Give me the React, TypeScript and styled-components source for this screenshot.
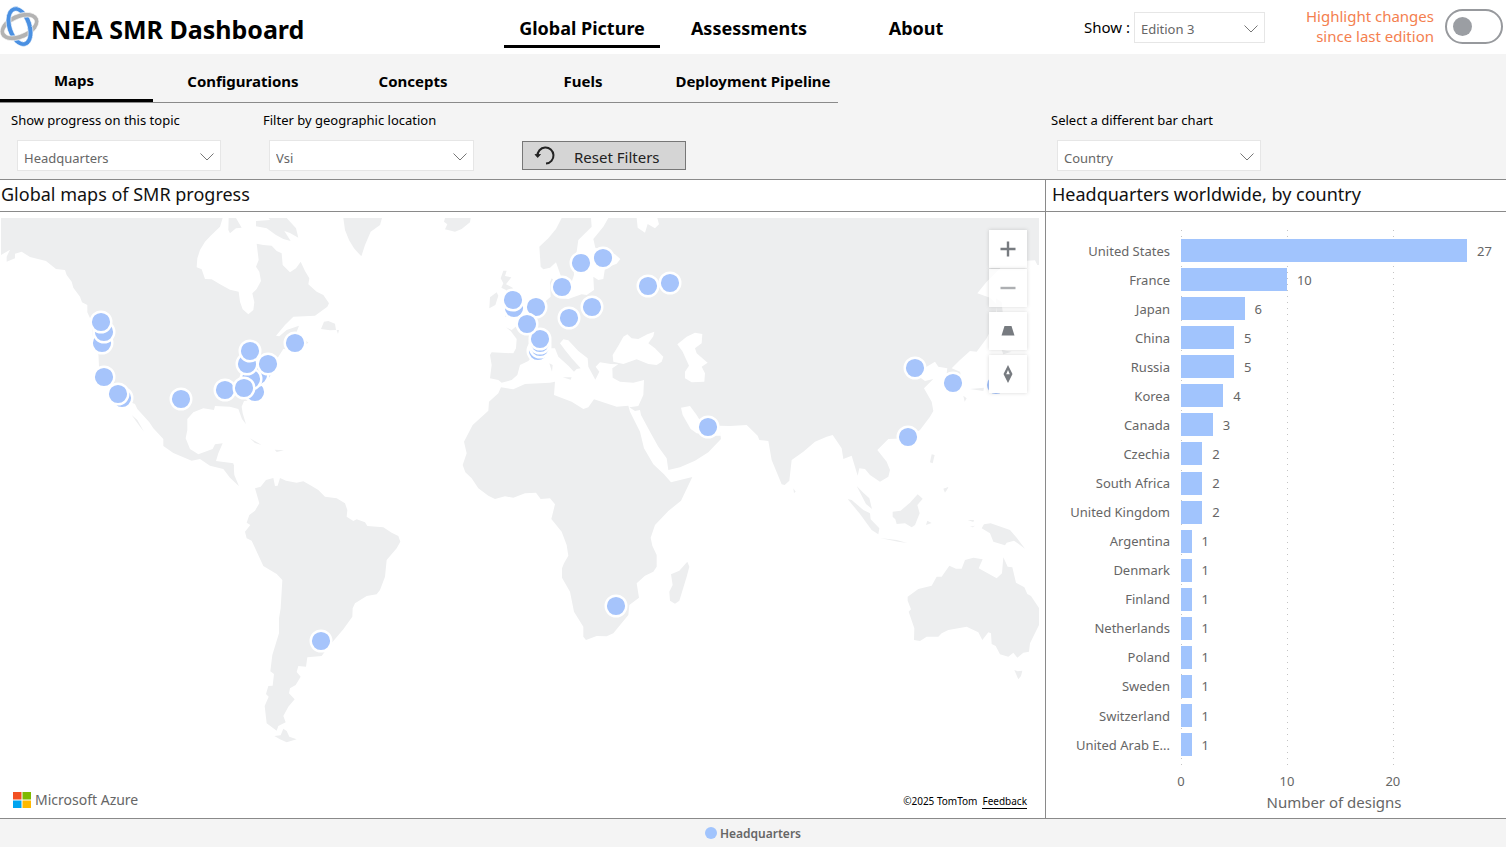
import React from "react";
import styled, { createGlobalStyle } from "styled-components";

const GlobalStyle = createGlobalStyle`
  *, *::before, *::after { box-sizing: border-box; }
  body {
    margin: 0;
    background: #fff;
    color: #000;
    font-family: "Noto Sans", "Open Sans", sans-serif;
    font-size: 13px;
  }
  button, select, input { font-family: inherit; }
`;

const RULE = "#8a8a8a";
const COLUMNS = "minmax(0, 1045fr) minmax(0, 461fr)";

const Page = styled.div`
  min-height: 100vh;
  display: flex;
  flex-direction: column;
`;

/* ---------- header ---------- */

const Header = styled.header`
  height: 54px;
  display: flex;
  align-items: center;
  background: #fff;
`;

const Brand = styled.div`
  flex: 0 0 504px;
  display: flex;
  align-items: center;
  gap: 11px;
`;

const Title = styled.h1`
  margin: 0;
  padding-top: 3px;
  font-size: 25px;
  line-height: 32px;
  font-weight: 700;
  white-space: nowrap;
`;

const MainNav = styled.nav`
  display: flex;
  gap: 11px;
`;

const NavLink = styled.a<{ $active?: boolean }>`
  width: 156px;
  height: 42px;
  padding-top: 10px;
  text-align: center;
  color: #000;
  text-decoration: none;
  font-size: 18px;
  line-height: 24px;
  font-weight: 700;
  border-bottom: 3px solid ${(p) => (p.$active ? "#000" : "transparent")};
`;

const HeaderTools = styled.div`
  margin-left: auto;
  padding-right: 3px;
  display: flex;
  align-items: center;
`;

const ShowLabel = styled.label`
  margin-right: 4px;
  font-size: 15px;
`;

const HighlightLabel = styled.label`
  width: 180px;
  padding: 0 11px 2px 0;
  text-align: right;
  font-size: 15px;
  line-height: 20px;
  color: #f4804f;
`;

const Toggle = styled.input`
  appearance: none;
  margin: 0 0 2px;
  width: 58px;
  height: 35px;
  border: 2px solid #97999d;
  border-radius: 18px;
  background: #fff;
  display: flex;
  align-items: center;
  padding-left: 6px;

  &::before {
    content: "";
    width: 19px;
    height: 19px;
    border-radius: 50%;
    background: #9b9ea3;
  }
  &:checked {
    justify-content: flex-end;
    padding-right: 6px;
  }
`;

/* ---------- selects ---------- */

const SelectBox = styled.span<{ $width: number }>`
  position: relative;
  display: block;
  width: ${(p) => p.$width}px;
  height: 31px;

  svg {
    position: absolute;
    right: 6px;
    top: 12px;
    pointer-events: none;
  }
`;

const Select = styled.select`
  appearance: none;
  width: 100%;
  height: 100%;
  padding: 4px 28px 0 6px;
  border: 1px solid #e6e6e6;
  border-radius: 0;
  background: #fff;
  color: #666;
  font-size: 13px;
`;

type DropdownProps = { id: string; value: string; width: number };

const Dropdown = ({ id, value, width }: DropdownProps) => (
  <SelectBox $width={width}>
    <Select id={id} defaultValue={value}>
      <option>{value}</option>
    </Select>
    <svg width="16" height="10" viewBox="0 0 16 10" fill="none" stroke="#777">
      <path d="M1.5 1.5 8 8l6.500-6.500" />
    </svg>
  </SelectBox>
);

/* ---------- tabs and filters ---------- */

const Controls = styled.section`
  background: #f4f4f4;
  border-bottom: 1px solid ${RULE};
`;

const Tabs = styled.nav`
  width: 838px;
  height: 49px;
  display: flex;
  border-bottom: 1px solid ${RULE};
`;

const Tab = styled.a<{ $active?: boolean }>`
  flex: 0 0 ${(p) => (p.$active ? 153 : 170)}px;
  height: 48px;
  margin-right: ${(p) => (p.$active ? 5 : 0)}px;
  padding: ${(p) => (p.$active ? "15px 5px 0 0" : "16px 0 0")};
  border-bottom: ${(p) => (p.$active ? "3px solid #000" : "0")};
  text-align: center;
  white-space: nowrap;
  text-decoration: none;
  color: #000;
  font-size: 15px;
  line-height: 22px;
  font-weight: 700;
`;

const Filters = styled.div`
  display: grid;
  grid-template-columns: ${COLUMNS};
  height: 76px;
`;

const FilterGroup = styled.div<{ $indent: number }>`
  display: flex;
  align-items: flex-start;
  gap: 42px;
  padding: 7px 0 0 ${(p) => p.$indent}px;
`;

const Field = styled.div`
  display: flex;
  flex-direction: column;
  gap: 10px;
  padding-left: 6px;

  label {
    margin-left: -6px;
    font-size: 13px;
    line-height: 20px;
    white-space: nowrap;
  }
`;

const ResetButton = styled.button`
  width: 164px;
  height: 29px;
  margin: 31px 0 0 6px;
  padding: 2px 0 0 11px;
  display: flex;
  align-items: center;
  gap: 18px;
  border: 1px solid #777;
  background: #d5d5d5;
  color: #222;
  font-size: 15px;
  text-align: left;

  svg { margin-top: -4px; }
`;

/* ---------- panels ---------- */

const Panels = styled.main`
  flex: 1;
  display: grid;
  grid-template-columns: ${COLUMNS};
`;

const Panel = styled.section`
  display: flex;
  flex-direction: column;
  min-width: 0;

  & + & { border-left: 1px solid ${RULE}; }
`;

const PanelTitle = styled.h2<{ $indent: number }>`
  margin: 0;
  height: 32px;
  padding-left: ${(p) => p.$indent}px;
  border-bottom: 1px solid ${RULE};
  font-size: 18px;
  line-height: 28px;
  font-weight: 400;
  white-space: nowrap;
  color: #111;
`;

/* ---------- map ---------- */

const MapArea = styled.div`
  position: relative;
  flex: 1;
  min-height: 606px;
  padding: 6px 6px 6px 1px;
  display: flex;
`;

const MapSvg = styled.svg`
  width: 100%;
  height: 100%;
  min-height: 594px;
`;

const MapControls = styled.div`
  position: absolute;
  top: 18px;
  right: 18px;
  display: flex;
  flex-direction: column;
`;

const MapButton = styled.button<{ $gap?: number; $faded?: boolean }>`
  width: 38px;
  height: 38px;
  margin-top: ${(p) => p.$gap ?? 0}px;
  padding: 0;
  border: 0;
  display: grid;
  place-items: center;
  background: ${(p) => (p.$faded ? "rgba(255,255,255,.8)" : "#fff")};
  box-shadow: 0 0 4px rgba(0, 0, 0, 0.16);

  svg { opacity: ${(p) => (p.$faded ? 0.6 : 1)}; }
`;

const MapFooter = styled.div`
  position: absolute;
  left: 13px;
  right: 18px;
  bottom: 8px;
  display: flex;
  align-items: center;
  justify-content: space-between;
`;

const Azure = styled.span`
  display: flex;
  align-items: center;
  gap: 4px;
  font-size: 14px;
  line-height: 20px;
  color: #666;
`;

const Attribution = styled.span`
  display: flex;
  gap: 5px;
  padding-top: 2px;
  font-size: 10px;
  line-height: 14px;

  a {
    color: #000;
    text-decoration: none;
    border-bottom: 1px solid #000;
  }
`;

const WEST = [
  "M3 9H668L660 35 632 62 615 80 600 105 592 130 590 157 605 163 615 192 635 193 660 208 690 224 716 230 720 260 728 283 745 298 760 285 763 262 757 235 770 222 783 198 778 170 768 155 776 135 770 86 790 90 815 92 830 108 845 115 848 150 870 172 888 160 902 140 915 168 928 190 925 208 950 230 970 240 987 265 982 275 945 302 880 305 855 330 828 362 838 364 860 345 897 332 890 350 905 365 925 383 905 395 885 405 850 402 835 425 805 455 800 480 790 500 790 530 760 555 732 558 725 575 728 595 738 628 726 612 715 582 690 575 645 573 642 585 610 580 580 592 562 612 562 645 557 670 570 702 595 718 638 702 645 688 668 685 655 715 648 738 700 745 703 780 717 814 690 788 670 762 630 752 600 732 575 737 520 714 490 693 490 672 460 640 448 622 412 582 405 567 360 550 345 520 315 490 297 455 295 410 280 380 275 320 262 292 262 270 246 262 240 245 220 218 215 200 200 180 195 165 168 162 138 138 90 126 65 110 45 116 45 130 20 140 20 125 30 104 3 120Z",
  "M686 9H708L725 38 708 40 690 55 685 45Z",
  "M768 18 810 15 806 9H860L888 40 895 68 870 54 853 48 872 78 850 72 828 60 800 40 768 34Z",
  "M1030 9H1146L1140 30 1112 50 1095 90 1084 124 1062 100 1047 75 1035 45Z",
  "M963 342 972 320 985 318 1005 326 1008 345 990 346Z M1010 345 1017 345 1014 357Z",
  "M395 600 412 615 432 650 418 632Z M750 670 785 690 765 684Z M824 704 852 706 830 711Z",
];

const SOUTH_AMERICA = [
  "M3 8 12 15 10 55 25 77 3 45Z",
  "M75 85 92 80 108 60 130 54 135 78 143 77 150 54 168 62 200 68 220 64 245 78 265 90 285 110 320 115 345 130 352 150 350 170 370 183 380 178 405 187 412 198 460 202 485 218 505 228 511 245 500 265 470 300 465 350 450 390 440 403 410 408 375 430 368 445 367 470 340 508 310 543 295 560 275 588 232 592 228 620 205 618 200 636 212 650 197 675 180 685 177 700 194 718 175 740 160 768 167 787 145 798 140 812 110 790 104 738 116 710 108 702 115 678 128 677 132 642 121 634 127 585 147 520 147 475 152 445 157 360 140 342 100 318 65 242 50 235 45 215 61 195 50 188 58 165 75 152 88 130Z",
  "M133 828 152 826 160 806 170 813 178 830 200 838 170 847 150 838Z",
];

const EAST = [
  "M15 9H92L90 22 65 42 45 50 15 43 22 28 12 20Z",
  "M365 9H453L455 35 415 75 410 110 400 130 402 180 390 215 372 212 365 190 348 142 330 158 310 163 302 155 298 95 325 70 348 42Z",
  "M505 9 490 35 460 72 466 98 500 110 525 118 541 132 530 146 495 160 490 192 475 195 460 185 462 225 440 240 425 238 385 252 362 250 348 240 335 225 345 200 335 190 330 202 332 245 310 265 290 275 262 305 240 325 215 345 198 337 212 348 230 372 228 400 220 415 155 412 150 420 155 450 150 490 175 495 185 503 215 495 232 480 240 450 265 438 275 425 300 425 325 400 345 400 355 425 385 452 402 470 410 462 422 460 395 430 375 405 360 385 370 373 385 376 415 408 443 430 445 455 466 494 478 470 467 455 480 442 512 447 535 448 517 460 518 488 540 500 580 503 612 495 610 540 595 573 568 577 585 588 600 585 603 600 630 650 655 695 680 730 685 765 720 757 765 737 805 712 843 672 838 632 870 633 920 630 953 662 958 675 985 678 995 735 1025 808 1034 810 1048 797 1055 735 1090 710 1125 680 1160 665 1178 660 1205 700 1210 732 1235 722 1253 782 1258 760 1275 762 1290 780 1320 800 1345 785 1350 765 1340 740 1312 705 1345 672 1400 670 1440 645 1470 605 1480 588 1475 560 1452 520 1480 492 1455 498 1430 480 1460 455 1485 440 1495 455 1522 460 1520 475 1535 498 1565 490 1560 470 1535 460 1560 435 1590 408 1610 410 1640 370 1660 330 1672 270 1650 248 1612 235 1640 200 1700 140 1760 137 1785 136 1792 150 1797 150V9Z",
  "M190 167 200 167 195 183 214 187 198 208 218 218 225 250 250 275 245 298 195 305 205 280 198 250 198 225 184 218 190 205 182 190Z",
  "M150 247 170 232 175 242 166 270 148 280Z",
  "M368 487 395 487 392 494Z M328 445 338 450 336 470Z",
  "M183 517 220 523 255 507 330 503 345 500 342 540 395 560 430 582 445 577 462 553 530 575 565 572 570 590 600 650 612 700 640 748 672 778 693 802 757 786 723 857 685 888 645 930 632 968 637 992 650 1020 650 1055 640 1070 615 1082 590 1105 597 1148 568 1170 565 1200 520 1255 500 1264 470 1263 438 1275 430 1265 430 1235 402 1190 390 1130 366 1088 366 1060 372 1045 385 1022 380 990 365 950 334 912 345 868 330 850 302 852 288 833 255 835 220 848 195 844 165 852 145 842 115 820 95 790 76 772 68 750 80 715 72 680 98 630 145 587 147 560 175 535Z",
  "M742 1040 748 1055 740 1085 718 1157 705 1166 690 1157 688 1130 698 1110 693 1078 718 1067Z",
  "M1475 718 1484 720 1478 745 1470 742Z M1512 822 1525 817 1518 828Z M1590 522 1632 518 1630 528Z M1570 542 1580 550 1574 560Z M1060 820 1067 830 1062 834Z",
  "M1668 250 1685 262 1692 330 1684 300 1670 290Z M1685 405 1715 410 1690 418Z",
];

const SEAS = [
  "M590 9 593 38 615 53 623 27 645 40 657 28 652 9Z",
  "M520 440 518 420 535 392 550 365 562 358 575 370 595 372 622 358 643 350 640 364 625 385 645 400 670 425 665 440 650 450 625 447 590 433 550 447Z",
  "M712 388 740 365 765 353 787 357 785 385 765 400 770 415 803 443 785 455 795 475 793 500 755 502 735 490 735 470 747 452 728 410Z",
  "M723 578 750 573 770 600 785 625 838 632 843 662 820 662 770 655 752 642 728 600Z",
];

const OCEANIA = [
  "M80 48 100 68 118 85 126 117 108 102Z",
  "M53 87 65 90 100 120 120 130 122 148 148 175 145 193 125 180 90 132Z",
  "M150 204 200 210 232 219 205 215Z M288 165 292 152 305 159Z M340 56 355 51 345 68Z M413 150 432 150 430 156Z M420 170 435 167 428 172Z",
  "M188 125 212 122 240 98 263 73 278 86 262 105 269 130 255 165 245 172 225 160 200 162 196 148 188 140Z",
  "M455 175 462 163 482 160 540 180 560 203 585 236 552 212 530 218 525 226 490 215 480 190Z",
  "M233 380 265 357 305 347 320 320 335 320 358 287 378 296 395 296 405 270 430 263 458 268 446 295 500 325 516 310 520 262 533 290 547 292 558 338 583 352 592 372 603 378 627 414 627 465 600 520 597 545 580 548 562 563 550 548 535 560 510 553 497 528 485 522 483 490 475 487 457 510 445 487 410 470 355 480 335 490 325 500 290 500 270 513 252 510 253 475 236 425 243 418 233 392Z",
  "M553 600 563 604 577 602 573 618 565 628Z",
];

const SITES: [number, number][] = [
  [102, 343], [104, 332], [101, 322], [104, 377], [122, 398], [118, 394],
  [181, 399], [225, 390], [255, 392], [265, 369], [262, 372], [258, 375],
  [251, 379], [244, 388], [247, 364], [268, 364], [250, 351], [295, 343],
  [581, 263], [603, 258], [562, 287], [648, 286], [670, 283], [514, 308],
  [513, 300], [536, 307], [569, 318], [592, 307], [538, 351], [540, 347],
  [540, 343], [540, 339], [527, 324], [708, 427], [915, 368], [953, 383],
  [996, 385], [908, 437], [616, 606], [321, 641],
];

const Land = ({ x, y, shapes, fill = "#edeeef" }: { x: number; y: number; shapes: string[]; fill?: string }) => (
  <g transform={`translate(${x} ${y}) scale(0.33333)`} fill={fill}>
    {shapes.map((d) => (
      <path key={d} d={d} />
    ))}
  </g>
);

const WorldMap = () => (
  <MapSvg viewBox="1 218 1038 594" preserveAspectRatio="xMinYMin slice" role="img" aria-label="World map of headquarters">
    <Land x={0} y={215} shapes={WEST} />
    <Land x={230} y={460} shapes={SOUTH_AMERICA} />
    <Land x={440} y={215} shapes={EAST} />
    <Land x={440} y={215} shapes={SEAS} fill="#fff" />
    <Land x={830} y={470} shapes={OCEANIA} />
    {SITES.map(([cx, cy]) => (
      <circle key={`${cx}-${cy}`} cx={cx} cy={cy} r="10.300" fill="#a6c4fb" stroke="#fff" strokeWidth="2.400" />
    ))}
  </MapSvg>
);

/* ---------- bar chart ---------- */

const ROWS: [string, number][] = [
  ["United States", 27],
  ["France", 10],
  ["Japan", 6],
  ["China", 5],
  ["Russia", 5],
  ["Korea", 4],
  ["Canada", 3],
  ["Czechia", 2],
  ["South Africa", 2],
  ["United Kingdom", 2],
  ["Argentina", 1],
  ["Denmark", 1],
  ["Finland", 1],
  ["Netherlands", 1],
  ["Poland", 1],
  ["Sweden", 1],
  ["Switzerland", 1],
  ["United Arab E...", 1],
];

const Chart = styled.div`
  flex: 1;
  padding: 18px 39px 6px 0;
  display: flex;
  flex-direction: column;
  color: #666;
  font-size: 13px;
`;

const Plot = styled.div`
  position: relative;
  flex: 1;
  padding: 6px 0 11px;
  display: flex;
  flex-direction: column;
`;

const GridLines = styled.div`
  position: absolute;
  inset: 0 0 0 135px;
  display: grid;
  grid-template-columns: 10fr 10fr 7fr;

  span {
    width: 1px;
    background: repeating-linear-gradient(#c4c4c4 0 1px, transparent 1px 6px);
  }
`;

const BarList = styled.ul`
  position: relative;
  flex: 1;
  margin: 0;
  padding: 0;
  list-style: none;
  display: flex;
  flex-direction: column;
`;

const BarRow = styled.li`
  flex: 1;
  display: grid;
  grid-template-columns: 124px minmax(0, 1fr);
  column-gap: 11px;
  align-items: center;
  line-height: 20px;
`;

const BarName = styled.span`
  text-align: right;
  white-space: nowrap;
`;

const BarTrack = styled.span`
  display: flex;
  align-items: center;
  gap: 10px;
`;

const Bar = styled.span`
  flex: none;
  height: 23px;
  background: #a1c4fd;
`;

const Axis = styled.div`
  margin-left: 135px;
  display: grid;
  grid-template-columns: 10fr 10fr 7fr;
  line-height: 22px;

  span {
    justify-self: start;
    transform: translateX(-50%);
  }
`;

const AxisTitle = styled.div`
  margin: 0 -20px 0 135px;
  text-align: center;
  font-size: 15px;
  line-height: 20px;
`;

const BarChart = () => (
  <Chart>
    <Plot>
      <GridLines>
        <span />
        <span />
        <span />
      </GridLines>
      <BarList>
        {ROWS.map(([name, count]) => (
          <BarRow key={name}>
            <BarName>{name}</BarName>
            <BarTrack>
              <Bar style={{ width: `${(count / 27) * 100}%` }} />
              {count}
            </BarTrack>
          </BarRow>
        ))}
      </BarList>
    </Plot>
    <Axis>
      <span>0</span>
      <span>10</span>
      <span>20</span>
    </Axis>
    <AxisTitle>Number of designs</AxisTitle>
  </Chart>
);

/* ---------- legend ---------- */

const Legend = styled.footer`
  height: 29px;
  display: flex;
  align-items: center;
  justify-content: center;
  gap: 3px;
  background: #f4f4f4;
  border-top: 1px solid ${RULE};
  color: #666;
  font-size: 12px;
  font-weight: 600;

  &::before {
    content: "";
    width: 12px;
    height: 12px;
    border-radius: 50%;
    background: #a1c4fd;
  }
`;

/* ---------- logo ---------- */

const Ring = ({ color, angle }: { color: string; angle: number }) => (
  <g transform={`rotate(${angle} 19.500 20.500)`} fillRule="evenodd">
    <path
      d="M19.500 0A12.500 20.500 0 1 1 19.490 0ZM19.500 4.500A7.500 16 0 1 0 19.510 4.500Z"
      fill={color}
      stroke="#fff"
      strokeWidth="0.600"
    />
  </g>
);

const Logo = () => (
  <svg width="40" height="42" viewBox="0 0 40 42" aria-hidden="true">
    <clipPath id="weave">
      <path d="M0 0H18V21H0ZM21 21H40V42H21Z" />
    </clipPath>
    <Ring color="#4a90e2" angle={-18} />
    <Ring color="#b3b3b3" angle={66} />
    <g clipPath="url(#weave)">
      <Ring color="#4a90e2" angle={-18} />
    </g>
  </svg>
);

export default function App() {
  return (
    <Page>
      <GlobalStyle />
      <Header>
        <Brand>
          <Logo />
          <Title>NEA SMR Dashboard</Title>
        </Brand>
        <MainNav>
          <NavLink href="#global" $active>Global Picture</NavLink>
          <NavLink href="#assessments">Assessments</NavLink>
          <NavLink href="#about">About</NavLink>
        </MainNav>
        <HeaderTools>
          <ShowLabel htmlFor="edition">Show :</ShowLabel>
          <Dropdown id="edition" value="Edition 3" width={131} />
          <HighlightLabel htmlFor="highlight">
            Highlight changes
            <br />
            since last edition
          </HighlightLabel>
          <Toggle id="highlight" type="checkbox" />
        </HeaderTools>
      </Header>

      <Controls>
        <Tabs>
          <Tab href="#maps" $active>Maps</Tab>
          <Tab href="#configurations">Configurations</Tab>
          <Tab href="#concepts">Concepts</Tab>
          <Tab href="#fuels">Fuels</Tab>
          <Tab href="#pipeline">Deployment Pipeline</Tab>
        </Tabs>
        <Filters>
          <FilterGroup $indent={11}>
            <Field>
              <label htmlFor="topic">Show progress on this topic</label>
              <Dropdown id="topic" value="Headquarters" width={204} />
            </Field>
            <Field>
              <label htmlFor="location">Filter by geographic location</label>
              <Dropdown id="location" value="Vsi" width={205} />
            </Field>
            <ResetButton type="button">
              <svg width="22" height="22" viewBox="0 0 22 22" fill="none" stroke="#222" strokeWidth="2">
                <path d="M3.500 12A8 8 0 1 1 12 19.500" />
                <path d="M1 10.500 3.700 13.500 6.500 10.500Z" fill="#222" strokeWidth="0.800" />
              </svg>
              Reset Filters
            </ResetButton>
          </FilterGroup>
          <FilterGroup $indent={6}>
            <Field>
              <label htmlFor="chart">Select a different bar chart</label>
              <Dropdown id="chart" value="Country" width={204} />
            </Field>
          </FilterGroup>
        </Filters>
      </Controls>

      <Panels>
        <Panel>
          <PanelTitle $indent={1}>Global maps of SMR progress</PanelTitle>
          <MapArea>
            <WorldMap />
            <MapControls>
              <MapButton type="button" aria-label="Zoom in">
                <svg width="16" height="16" viewBox="0 0 16 16" stroke="#777b80" strokeWidth="2.400">
                  <path d="M0.500 8H15.500M8 0.500V15.500" />
                </svg>
              </MapButton>
              <MapButton type="button" aria-label="Zoom out" $faded $gap={1}>
                <svg width="16" height="16" viewBox="0 0 16 16" stroke="#777b80" strokeWidth="2.400">
                  <path d="M0.500 8H15.500" />
                </svg>
              </MapButton>
              <MapButton type="button" aria-label="Tilt" $gap={5}>
                <svg width="14" height="10" viewBox="0 0 14 10" fill="#777b80">
                  <path d="M3.500 0H10.500L13.500 9.500H0.500Z" />
                </svg>
              </MapButton>
              <MapButton type="button" aria-label="Rotate" $gap={5}>
                <svg width="10" height="18" viewBox="0 0 10 18" fill="#777b80" fillRule="evenodd">
                  <path d="M5 0 9.500 9 5 18 0.500 9ZM5 5 3.200 9.300H6.800Z" />
                </svg>
              </MapButton>
            </MapControls>
            <MapFooter>
              <Azure>
                <svg width="18" height="16" viewBox="0 0 18 16">
                  <path d="M0 0H8.500V7.500H0Z" fill="#f25022" />
                  <path d="M9.500 0H18V7.500H9.500Z" fill="#7fba00" />
                  <path d="M0 8.500H8.500V16H0Z" fill="#00a4ef" />
                  <path d="M9.500 8.500H18V16H9.500Z" fill="#ffb900" />
                </svg>
                Microsoft Azure
              </Azure>
              <Attribution>
                ©2025 TomTom <a href="#feedback">Feedback</a>
              </Attribution>
            </MapFooter>
          </MapArea>
        </Panel>
        <Panel>
          <PanelTitle $indent={6}>Headquarters worldwide, by country</PanelTitle>
          <BarChart />
        </Panel>
      </Panels>

      <Legend>Headquarters</Legend>
    </Page>
  );
}
